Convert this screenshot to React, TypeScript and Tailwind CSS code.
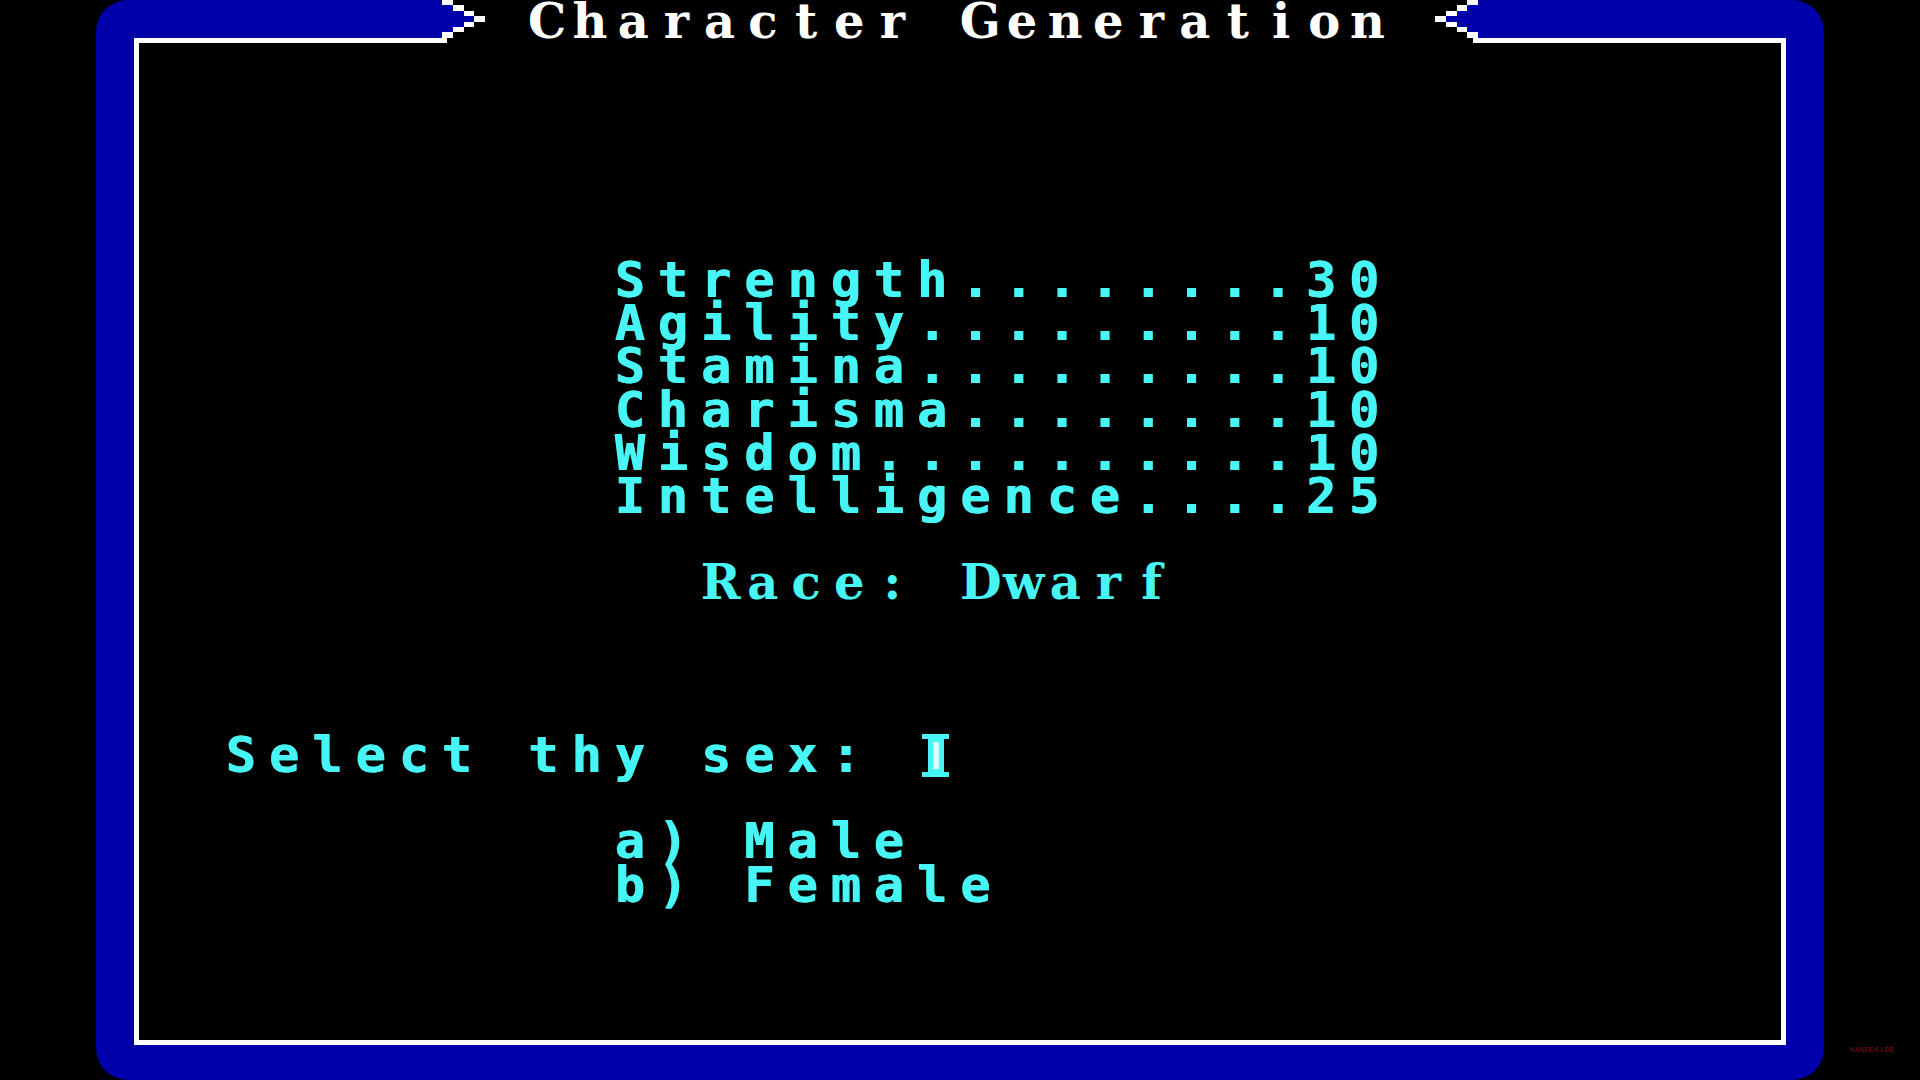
import React from "react";

const SANS = "font-['DejaVu_Sans_Mono',monospace] font-bold text-[50px] leading-[43.2px] tracking-[13.1px] whitespace-pre [text-shadow:1px_0_0_#48f5f5]";

function SerifCells({ text }: { text: string }) {
  return (
    <span className="inline-flex font-['DejaVu_Serif',serif] font-bold text-[48px] leading-[43.2px]">
      {Array.from(text).map((ch, i) => (
        <span key={i} className="inline-block w-[43.2px] pr-[5.4px] text-center whitespace-pre">
          {ch}
        </span>
      ))}
    </span>
  );
}

const LEFT_STEPS = [0, 2, 4, 6, 4, 2, 0];
const RIGHT_STEPS = [6, 4, 2, 0, 2, 4, 6];

function LeftChevron() {
  return (
    <svg width="43.2" height="43.2" viewBox="0 0 8 8" shapeRendering="crispEdges" className="block">
      <rect x="0" y="0" width="8" height="8" fill="#000" />
      {LEFT_STEPS.map((s, r) => (
        <g key={r}>
          {s > 0 && <rect x="0" y={r} width={s} height="1" fill="#0000aa" />}
          <rect x={s} y={r} width="2" height="1" fill="#fff" />
        </g>
      ))}
      <rect x="0" y="7" width="1" height="1" fill="#fff" />
    </svg>
  );
}

function RightChevron() {
  return (
    <svg width="43.2" height="43.2" viewBox="0 0 8 8" shapeRendering="crispEdges" className="block">
      <rect x="0" y="0" width="8" height="8" fill="#000" />
      {RIGHT_STEPS.map((s, r) => (
        <g key={r}>
          <rect x={s} y={r} width="2" height="1" fill="#fff" />
          {s + 2 < 8 && <rect x={s + 2} y={r} width={8 - s - 2} height="1" fill="#0000aa" />}
        </g>
      ))}
      <rect x="7" y="7" width="1" height="1" fill="#fff" />
    </svg>
  );
}

function Cursor() {
  return (
    <svg width="43.2" height="43.2" viewBox="0 0 8 8" shapeRendering="crispEdges" className="inline-block align-top">
      <rect x="1" y="0" width="5" height="1" fill="#48f5f5" />
      <rect x="2" y="1" width="3" height="6" fill="#48f5f5" />
      <rect x="3" y="1.5" width="1" height="5" fill="#d8ffff" />
      <rect x="1" y="7" width="5" height="1" fill="#48f5f5" />
    </svg>
  );
}

export default function App() {
  const stats = [
    "Strength........30",
    "Agility.........10",
    "Stamina.........10",
    "Charisma........10",
    "Wisdom..........10",
    "Intelligence....25",
  ];
  return (
    <div className="w-[1920px] h-[1080px] bg-black overflow-hidden relative">
      <div className="ml-[96px] w-[1728px] h-[1080px] rounded-[32px] bg-[#0000aa] pt-[38px] pl-[38px] pr-[38px] pb-[35px] relative">
        <div className="h-full border-[5px] border-white bg-black">
          <div className="flex flex-col pt-[216px] text-[#48f5f5]">
            <div className="flex flex-col pl-[475.4px]">
              {stats.map((s) => (
                <div key={s} className={`${SANS} h-[43.2px]`}>
                  {s}
                </div>
              ))}
            </div>
            <div className="mt-[43.2px] pl-[561.8px] h-[43.2px]">
              <SerifCells text="Race: Dwarf" />
            </div>
            <div className="mt-[129.6px] pl-[86.6px] h-[43.2px] flex">
              <span className={SANS}>Select thy sex: </span>
              <Cursor />
            </div>
            <div className="mt-[43.2px] pl-[475.4px] flex flex-col">
              <div className={`${SANS} h-[43.2px]`}>a) Male</div>
              <div className={`${SANS} h-[43.2px]`}>b) Female</div>
            </div>
          </div>
        </div>
        <div className="absolute top-0 left-[345.6px] flex h-[43.2px]">
          <LeftChevron />
          <div className="w-[950.4px] h-[43.2px] bg-black pl-[43.2px] text-white">
            <SerifCells text="Character Generation" />
          </div>
          <RightChevron />
        </div>
      </div>
      <div className="absolute left-[1850px] top-[1046px] text-[7px] leading-[8px] text-[#8a1010] font-['Liberation_Sans',sans-serif]">
        KANEDA LSB
      </div>
    </div>
  );
}
